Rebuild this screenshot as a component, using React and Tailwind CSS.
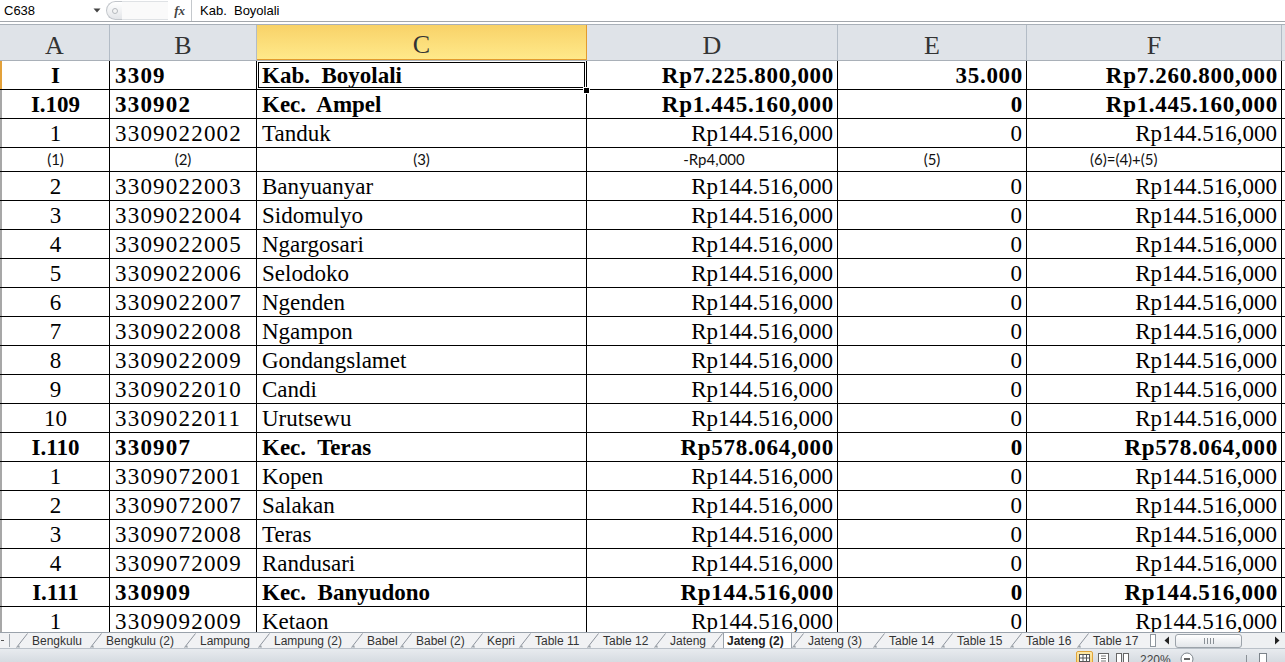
import React from 'react';

const serif = "font-['Liberation_Serif','Times_New_Roman',serif]";
const sans = "font-['Liberation_Sans',Arial,sans-serif]";

const base = { d: 'Rp144.516,000', e: '0', f: 'Rp144.516,000' };

const rows = [
  { a: 'I', b: '3309', c: 'Kab.  Boyolali', d: 'Rp7.225.800,000', e: '35.000', f: 'Rp7.260.800,000', bold: true, selected: true },
  { a: 'I.109', b: '330902', c: 'Kec.  Ampel', d: 'Rp1.445.160,000', e: '0', f: 'Rp1.445.160,000', bold: true },
  { ...base, a: '1', b: '3309022002', c: 'Tanduk' },
  { small: true },
  { ...base, a: '2', b: '3309022003', c: 'Banyuanyar' },
  { ...base, a: '3', b: '3309022004', c: 'Sidomulyo' },
  { ...base, a: '4', b: '3309022005', c: 'Ngargosari' },
  { ...base, a: '5', b: '3309022006', c: 'Selodoko' },
  { ...base, a: '6', b: '3309022007', c: 'Ngenden' },
  { ...base, a: '7', b: '3309022008', c: 'Ngampon' },
  { ...base, a: '8', b: '3309022009', c: 'Gondangslamet' },
  { ...base, a: '9', b: '3309022010', c: 'Candi' },
  { ...base, a: '10', b: '3309022011', c: 'Urutsewu' },
  { a: 'I.110', b: '330907', c: 'Kec.  Teras', d: 'Rp578.064,000', e: '0', f: 'Rp578.064,000', bold: true },
  { ...base, a: '1', b: '3309072001', c: 'Kopen' },
  { ...base, a: '2', b: '3309072007', c: 'Salakan' },
  { ...base, a: '3', b: '3309072008', c: 'Teras' },
  { ...base, a: '4', b: '3309072009', c: 'Randusari' },
  { a: 'I.111', b: '330909', c: 'Kec.  Banyudono', d: 'Rp144.516,000', e: '0', f: 'Rp144.516,000', bold: true },
  { ...base, a: '1', b: '3309092009', c: 'Ketaon' },
];

const tabs = [
  ['Bengkulu', 74], ['Bengkulu (2)', 94], ['Lampung', 74], ['Lampung (2)', 93], ['Babel', 49],
  ['Babel (2)', 71], ['Kepri', 48], ['Table 11', 68], ['Table 12', 67], ['Jateng', 57],
  ['Jateng (2)', 81], ['Jateng (3)', 81], ['Table 14', 68], ['Table 15', 69], ['Table 16', 67],
  ['Table 17', 71],
];

function Slash() {
  return (
    <svg width="12" height="15" viewBox="0 0 12 15" className="shrink-0">
      <line x1="0.5" y1="14.5" x2="11.5" y2="0.5" stroke="#8d949c" strokeWidth="1" />
      <path d="M1 14.5 L4 14.5 L3 12 Z" fill="#9aa1a8" />
    </svg>
  );
}

function SmallRow() {
  return (
    <div className="flex h-[24px] shrink-0 border-b border-black font-['Lato','Liberation_Sans',sans-serif] text-[15px] leading-none text-[#111]">
      <div className="w-[2px] bg-[#a7a7a7]" />
      <div className="flex w-[108px] items-center justify-center border-r border-black">(1)</div>
      <div className="flex w-[147px] items-center justify-center border-r border-black">(2)</div>
      <div className="flex w-[330px] items-center justify-center border-r border-black">(3)</div>
      <div className="flex w-[251px] items-center justify-center border-r border-black pl-[4px]">-Rp4,000</div>
      <div className="flex w-[189px] items-center justify-center border-r border-black">(5)</div>
      <div className="flex w-[255px] items-center border-r border-black pl-[63px]">(6)=(4)+(5)</div>
      <div className="flex-1" />
    </div>
  );
}

function DataRow({ r }) {
  const w = r.bold ? 'font-bold' : 'font-normal';
  const num = r.bold ? 'tracking-[0.7px] pr-[3px]' : 'pr-[4px]';
  return (
    <div className={`flex h-[29px] shrink-0 border-b border-black text-[23px] leading-none text-black ${serif}`}>
      <div className={r.selected ? 'w-[2px] bg-[#e3a13a]' : 'w-[2px] bg-[#a7a7a7]'} />
      <div className={`flex w-[108px] items-center justify-center border-r border-black pt-[1px] ${w}`}>{r.a}</div>
      <div className={`flex w-[147px] items-center border-r border-black pl-[5px] pt-[1px] tracking-[1.2px] ${w}`}>{r.b}</div>
      <div className={`relative flex w-[330px] items-center whitespace-pre border-r border-black pl-[5px] pt-[1px] ${w}`}>
        {r.c}
        {r.selected && (
          <>
            <div className="pointer-events-none absolute inset-[1px] border border-black" />
            <div className="absolute -bottom-[5px] -right-[4px] z-10 h-[7px] w-[7px] border border-white bg-black" />
          </>
        )}
      </div>
      <div className={`flex w-[251px] items-center justify-end border-r border-black pt-[1px] ${w} ${num}`}>{r.d}</div>
      <div className={`flex w-[189px] items-center justify-end border-r border-black pt-[1px] ${w} ${num}`}>{r.e}</div>
      <div className={`flex w-[255px] items-center justify-end border-r border-black pt-[1px] ${w} ${num}`}>{r.f}</div>
      <div className="flex-1" />
    </div>
  );
}

function ColHead({ label, width, active }) {
  return (
    <div
      className={
        active
          ? `flex ${width} items-center justify-center border-b border-r border-b-[#e29b2e] border-r-[#e29b2e] bg-linear-to-b from-[#f8d268] to-[#ffe98a] pt-[5px]`
          : `flex ${width} items-center justify-center border-r border-[#b3bcc6] pt-[5px]`
      }
    >
      {label}
    </div>
  );
}

export default function App() {
  return (
    <div className="flex h-[662px] w-[1285px] flex-col overflow-hidden bg-white">
      {/* formula bar */}
      <div className={`flex h-[22px] shrink-0 border-b border-[#a3a7ac] bg-white text-[13px] text-black ${sans}`}>
        <div className="flex w-[106px] items-center justify-between pl-[4px] pr-[5px]">
          <span>C638</span>
          <svg width="8" height="5" viewBox="0 0 8 5"><path d="M0.5 0.5 L7.5 0.5 L4 4.5 Z" fill="#444" /></svg>
        </div>
        <div className="flex w-[86px] items-center border-r border-[#c4c8cc]">
          <div className="my-[1px] flex h-[19px] w-[16px] items-center justify-center rounded-l-full border border-r-0 border-[#c2c6cb] bg-linear-to-b from-white to-[#e4e6e9]">
            <div className="h-[6px] w-[6px] rounded-full border border-[#b5b9be] bg-[#f4f4f4]" />
          </div>
          <div className="h-[19px] flex-1 border-y border-[#dfe2e5] bg-[#fafafa]" />
          <span className="px-[6px] font-['Liberation_Serif',serif] text-[13px] font-bold italic text-[#444]">fx</span>
        </div>
        <div className="flex flex-1 items-center whitespace-pre pl-[8px]">Kab.  Boyolali</div>
      </div>
      <div className="h-[2px] shrink-0 bg-white" />

      {/* column headers */}
      <div className={`flex h-[37px] shrink-0 border-y border-[#a9b0b8] bg-[#dfe3e8] text-[26px] text-[#333] ${serif}`}>
        <ColHead label="A" width="w-[110px]" />
        <ColHead label="B" width="w-[147px]" />
        <ColHead label="C" width="w-[330px]" active />
        <ColHead label="D" width="w-[251px]" />
        <ColHead label="E" width="w-[189px]" />
        <ColHead label="F" width="w-[255px]" />
        <div className="flex-1" />
      </div>

      {/* grid */}
      <div className="flex h-[571px] shrink-0 flex-col overflow-hidden">
        {rows.map((r, i) => (r.small ? <SmallRow key={i} /> : <DataRow key={i} r={r} />))}
      </div>

      {/* sheet tabs */}
      <div className={`flex h-[16px] shrink-0 border-t border-[#9aa2ab] bg-[#f1f2f4] text-[12px] leading-none text-[#333] ${sans}`}>
        <div className="flex w-[16px] items-center">
          <div className="ml-[1px] h-[1px] w-[3px] bg-[#555]" />
          <div className="ml-[5px] h-[13px] w-[1px] bg-[#a0a6ad]" />
        </div>
        <div className="flex w-[1132px] overflow-hidden">
          {tabs.map(([name, wd]) => {
            const active = name === 'Jateng (2)';
            return (
              <div key={name} className="flex shrink-0 items-end" style={{ width: wd }}>
                <Slash />
                <div
                  className={
                    active
                      ? 'flex h-full flex-1 items-center border-x border-[#9aa2ab] bg-white pl-[3px] font-bold text-[#222]'
                      : 'flex h-full flex-1 items-center pl-[4px]'
                  }
                >
                  {name}
                </div>
              </div>
            );
          })}
        </div>
        <div className="my-[1px] ml-[2px] w-[6px] border border-[#8f969e] bg-white" />
        <div className="ml-[4px] flex flex-1 items-center bg-[#eef0f2]">
          <svg width="10" height="9" viewBox="0 0 10 9" className="ml-[2px]"><path d="M7 0.5 L7 8.5 L2.5 4.5 Z" fill="#222" /></svg>
          <div className="ml-[3px] flex h-[14px] w-[67px] items-center justify-center rounded-[3px] border border-[#9ca3aa] bg-linear-to-b from-white to-[#e3e6ea]">
            <div className="flex gap-[2px]">
              <div className="h-[6px] w-[1px] bg-[#8a9096]" />
              <div className="h-[6px] w-[1px] bg-[#8a9096]" />
              <div className="h-[6px] w-[1px] bg-[#8a9096]" />
              <div className="h-[6px] w-[1px] bg-[#8a9096]" />
            </div>
          </div>
          <div className="flex-1" />
          <svg width="10" height="9" viewBox="0 0 10 9" className="mr-[3px]"><path d="M3 0.5 L3 8.5 L7.5 4.5 Z" fill="#222" /></svg>
        </div>
      </div>

      {/* status bar */}
      <div className={`flex h-[14px] shrink-0 overflow-hidden border-t border-[#b9c0c8] bg-linear-to-b from-[#e8ebef] to-[#d6dbe1] text-[12px] text-[#333] ${sans}`}>
        <div className="flex-1" />
        <div className="flex w-[209px] items-start pt-[2px]">
          <div className="flex h-[16px] w-[17px] items-start justify-center rounded-[2px] border border-[#e0a43a] bg-linear-to-b from-[#fde9a8] to-[#f9cf6a] pt-[2px]">
            <svg width="11" height="11" viewBox="0 0 11 11">
              <rect x="0.5" y="0.5" width="10" height="10" fill="white" stroke="#555" />
              <path d="M0.5 4 H10.5 M0.5 7.5 H10.5 M4 0.5 V10.5 M7.5 0.5 V10.5" stroke="#555" />
            </svg>
          </div>
          <svg width="12" height="12" viewBox="0 0 12 12" className="ml-[5px] mt-[2px]">
            <rect x="0.5" y="0.5" width="10" height="11" fill="white" stroke="#666" />
            <path d="M3 3 H8 M3 5.5 H8 M3 8 H8" stroke="#777" />
          </svg>
          <svg width="13" height="12" viewBox="0 0 13 12" className="ml-[6px] mt-[2px]">
            <rect x="0.5" y="0.5" width="5" height="11" fill="white" stroke="#666" />
            <rect x="7.5" y="0.5" width="5" height="11" fill="white" stroke="#666" />
          </svg>
          <span className="ml-[11px] mt-[3px] leading-none text-[#444]">220%</span>
          <svg width="14" height="14" viewBox="0 0 14 14" className="ml-[9px] mt-[1px]">
            <circle cx="7" cy="7" r="6" fill="white" stroke="#7d848b" />
            <path d="M4 7 H10" stroke="#333" strokeWidth="1.5" />
          </svg>
          <div className="mt-[8px] flex flex-1 items-center">
            <div className="h-[1px] w-[52px] bg-[#8a9096]" />
            <div className="mt-[-6px] h-[8px] w-[1px] bg-[#8a9096]" />
            <div className="h-[1px] w-[12px] bg-[#8a9096]" />
            <div className="mt-[-6px] h-[12px] w-[8px] border border-[#7c838a] bg-white" />
            <div className="h-[1px] flex-1 bg-[#8a9096]" />
          </div>
        </div>
      </div>
    </div>
  );
}
